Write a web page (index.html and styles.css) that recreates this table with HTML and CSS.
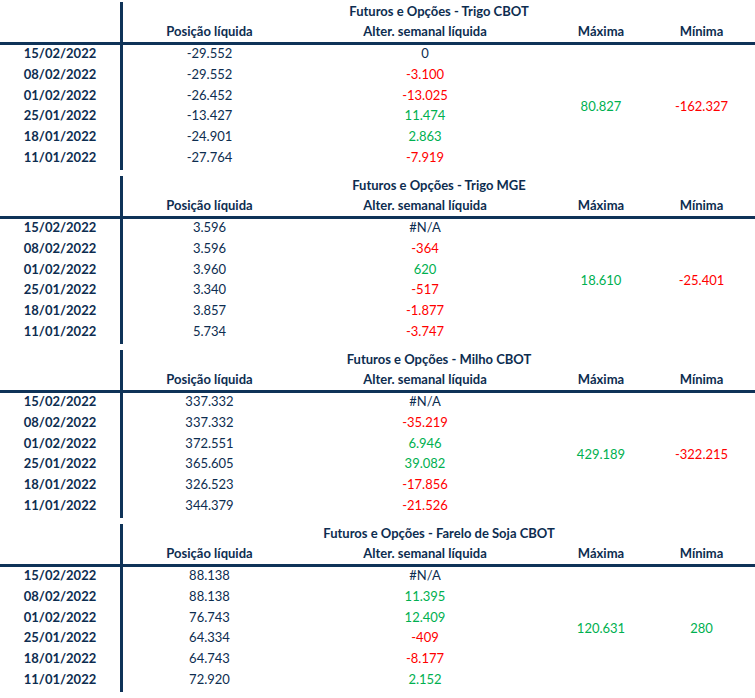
FILE: index.html
```html
<!DOCTYPE html>
<html lang="pt">
<head>
<meta charset="utf-8">
<title>Futuros e Opções</title>
<link rel="stylesheet" href="styles.css">
</head>
<body>
<main class="sheet">

<table class="block">
  <colgroup><col class="c-date"><col class="c-pos"><col class="c-alt"><col class="c-max"><col class="c-min"></colgroup>
  <tr class="title-row"><td class="date"></td><th colspan="4" class="title">Futuros e Opções - Trigo CBOT</th></tr>
  <tr class="head-row"><td class="date"></td><th>Posição líquida</th><th>Alter. semanal líquida</th><th>Máxima</th><th>Mínima</th></tr>
  <tr class="data"><td class="date">15/02/2022</td><td>-29.552</td><td>0</td><td rowspan="6" class="pos-val">80.827</td><td rowspan="6" class="neg-val">-162.327</td></tr>
  <tr class="data"><td class="date">08/02/2022</td><td>-29.552</td><td class="neg-val">-3.100</td></tr>
  <tr class="data"><td class="date">01/02/2022</td><td>-26.452</td><td class="neg-val">-13.025</td></tr>
  <tr class="data"><td class="date">25/01/2022</td><td>-13.427</td><td class="pos-val">11.474</td></tr>
  <tr class="data"><td class="date">18/01/2022</td><td>-24.901</td><td class="pos-val">2.863</td></tr>
  <tr class="data"><td class="date">11/01/2022</td><td>-27.764</td><td class="neg-val">-7.919</td></tr>
</table>

<table class="block">
  <colgroup><col class="c-date"><col class="c-pos"><col class="c-alt"><col class="c-max"><col class="c-min"></colgroup>
  <tr class="title-row"><td class="date"></td><th colspan="4" class="title">Futuros e Opções - Trigo MGE</th></tr>
  <tr class="head-row"><td class="date"></td><th>Posição líquida</th><th>Alter. semanal líquida</th><th>Máxima</th><th>Mínima</th></tr>
  <tr class="data"><td class="date">15/02/2022</td><td>3.596</td><td>#N/A</td><td rowspan="6" class="pos-val">18.610</td><td rowspan="6" class="neg-val">-25.401</td></tr>
  <tr class="data"><td class="date">08/02/2022</td><td>3.596</td><td class="neg-val">-364</td></tr>
  <tr class="data"><td class="date">01/02/2022</td><td>3.960</td><td class="pos-val">620</td></tr>
  <tr class="data"><td class="date">25/01/2022</td><td>3.340</td><td class="neg-val">-517</td></tr>
  <tr class="data"><td class="date">18/01/2022</td><td>3.857</td><td class="neg-val">-1.877</td></tr>
  <tr class="data"><td class="date">11/01/2022</td><td>5.734</td><td class="neg-val">-3.747</td></tr>
</table>

<table class="block">
  <colgroup><col class="c-date"><col class="c-pos"><col class="c-alt"><col class="c-max"><col class="c-min"></colgroup>
  <tr class="title-row"><td class="date"></td><th colspan="4" class="title">Futuros e Opções - Milho CBOT</th></tr>
  <tr class="head-row"><td class="date"></td><th>Posição líquida</th><th>Alter. semanal líquida</th><th>Máxima</th><th>Mínima</th></tr>
  <tr class="data"><td class="date">15/02/2022</td><td>337.332</td><td>#N/A</td><td rowspan="6" class="pos-val">429.189</td><td rowspan="6" class="neg-val">-322.215</td></tr>
  <tr class="data"><td class="date">08/02/2022</td><td>337.332</td><td class="neg-val">-35.219</td></tr>
  <tr class="data"><td class="date">01/02/2022</td><td>372.551</td><td class="pos-val">6.946</td></tr>
  <tr class="data"><td class="date">25/01/2022</td><td>365.605</td><td class="pos-val">39.082</td></tr>
  <tr class="data"><td class="date">18/01/2022</td><td>326.523</td><td class="neg-val">-17.856</td></tr>
  <tr class="data"><td class="date">11/01/2022</td><td>344.379</td><td class="neg-val">-21.526</td></tr>
</table>

<table class="block">
  <colgroup><col class="c-date"><col class="c-pos"><col class="c-alt"><col class="c-max"><col class="c-min"></colgroup>
  <tr class="title-row"><td class="date"></td><th colspan="4" class="title">Futuros e Opções - Farelo de Soja CBOT</th></tr>
  <tr class="head-row"><td class="date"></td><th>Posição líquida</th><th>Alter. semanal líquida</th><th>Máxima</th><th>Mínima</th></tr>
  <tr class="data"><td class="date">15/02/2022</td><td>88.138</td><td>#N/A</td><td rowspan="6" class="pos-val">120.631</td><td rowspan="6" class="pos-val">280</td></tr>
  <tr class="data"><td class="date">08/02/2022</td><td>88.138</td><td class="pos-val">11.395</td></tr>
  <tr class="data"><td class="date">01/02/2022</td><td>76.743</td><td class="pos-val">12.409</td></tr>
  <tr class="data"><td class="date">25/01/2022</td><td>64.334</td><td class="neg-val">-409</td></tr>
  <tr class="data"><td class="date">18/01/2022</td><td>64.743</td><td class="neg-val">-8.177</td></tr>
  <tr class="data"><td class="date">11/01/2022</td><td>72.920</td><td class="pos-val">2.152</td></tr>
</table>

</main>
</body>
</html>
```

FILE: styles.css
```css
html, body {
  margin: 0;
  padding: 0;
  background: #ffffff;
}

.sheet {
  width: 755px;
  padding-top: 2px;
  font-family: Lato, "Open Sans", "Liberation Sans", sans-serif;
  font-size: 13px;
  color: #0d2d50;
}

.block {
  width: 755px;
  table-layout: fixed;
  border-collapse: separate;
  border-spacing: 0;
  margin: 0 0 6.2px 0;
}

.c-date { width: 123px; }
.c-pos { width: 173px; }
.c-alt { width: 258px; }
.c-max { width: 94px; }
.c-min { width: 107px; }

.block td,
.block th {
  padding: 0;
  text-align: center;
  vertical-align: middle;
  white-space: nowrap;
}

.block th {
  font-weight: 700;
}

.title-row {
  height: 20px;
}

.title-row th,
.title-row td {
  line-height: 18px;
  padding-bottom: 2px;
}

.head-row {
  height: 23px;
}

.head-row th,
.head-row td {
  line-height: 18px;
  padding-bottom: 2px;
  border-bottom: 3px solid #0f3358;
}

.data {
  height: 20.8px;
}

.data td {
  line-height: 17.8px;
  padding-bottom: 3px;
}

.block td.date {
  border-right: 3px solid #0f3358;
  font-weight: 700;
}

.block td[rowspan] {
  padding-bottom: 0;
}

.pos-val {
  color: #00b050;
}

.neg-val {
  color: #ff0000;
}
```
